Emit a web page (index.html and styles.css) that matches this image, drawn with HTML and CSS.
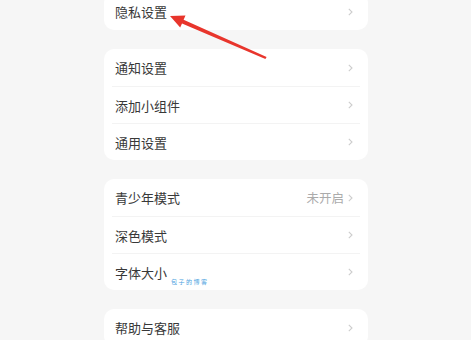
FILE: index.html
```html
<!DOCTYPE html>
<html lang="zh">
<head>
<meta charset="utf-8">
<link rel="stylesheet" href="styles.css">
</head>
<body>
<div class="page">
  <div class="card">
    <div class="row"><span class="label">隐私设置</span><span class="right"><svg class="chev" viewBox="0 0 5 8"><polyline points="0.8,0.8 4,4 0.8,7.2"/></svg></span></div>
  </div>
  <div class="card">
    <div class="row"><span class="label">通知设置</span><span class="right"><svg class="chev" viewBox="0 0 5 8"><polyline points="0.8,0.8 4,4 0.8,7.2"/></svg></span></div>
    <div class="row"><span class="label">添加小组件</span><span class="right"><svg class="chev" viewBox="0 0 5 8"><polyline points="0.8,0.8 4,4 0.8,7.2"/></svg></span></div>
    <div class="row"><span class="label">通用设置</span><span class="right"><svg class="chev" viewBox="0 0 5 8"><polyline points="0.8,0.8 4,4 0.8,7.2"/></svg></span></div>
  </div>
  <div class="card">
    <div class="row"><span class="label">青少年模式</span><span class="right"><span class="value">未开启</span><svg class="chev" viewBox="0 0 5 8"><polyline points="0.8,0.8 4,4 0.8,7.2"/></svg></span></div>
    <div class="row"><span class="label">深色模式</span><span class="right"><svg class="chev" viewBox="0 0 5 8"><polyline points="0.8,0.8 4,4 0.8,7.2"/></svg></span></div>
    <div class="row"><span class="label">字体大小</span><span class="right"><svg class="chev" viewBox="0 0 5 8"><polyline points="0.8,0.8 4,4 0.8,7.2"/></svg></span></div>
  </div>
  <div class="card">
    <div class="row"><span class="label">帮助与客服</span><span class="right"><svg class="chev" viewBox="0 0 5 8"><polyline points="0.8,0.8 4,4 0.8,7.2"/></svg></span></div>
  </div>
</div>
<div class="watermark">包子的博客</div>
<svg class="arrow" viewBox="0 0 471 70"><polygon points="170,16 185.5,15.5 183.6,19.8 266.6,57 265.4,59 182,23.4 180.2,27.6"/></svg>
</body>
</html>
```
FILE: styles.css
```css
html, body {
  margin: 0;
  padding: 0;
}
body {
  width: 471px;
  height: 340px;
  overflow: hidden;
  background: #f6f6f6;
  font-family: "Noto Sans CJK SC", "Noto Sans", sans-serif;
  position: relative;
}
.page {
  display: flex;
  flex-direction: column;
  gap: 19px;
  margin-top: -7px;
  padding-left: 104px;
  width: 264px;
}
.card {
  background: #fff;
  border-radius: 10px;
  display: flex;
  flex-direction: column;
}
.row {
  height: 37px;
  margin: 0 8px;
  padding: 0 7px 0 3px;
  display: flex;
  align-items: center;
  justify-content: space-between;
  box-sizing: border-box;
}
.row + .row {
  border-top: 1px solid #f3f3f3;
}
.label {
  font-size: 13px;
  color: #383838;
}
.right {
  display: flex;
  align-items: center;
  gap: 4px;
}
.value {
  font-size: 12.5px;
  color: #ababab;
}
.chev {
  width: 5px;
  height: 8px;
  fill: none;
  stroke: #cdcdcd;
  stroke-width: 1.1;
}
.watermark {
  position: absolute;
  left: 171px;
  top: 277px;
  font-size: 6px;
  color: #4a9fe0;
  letter-spacing: 1.5px;
}
.arrow {
  position: absolute;
  left: 0;
  top: 0;
  width: 471px;
  height: 70px;
  fill: #e8352c;
}
```
